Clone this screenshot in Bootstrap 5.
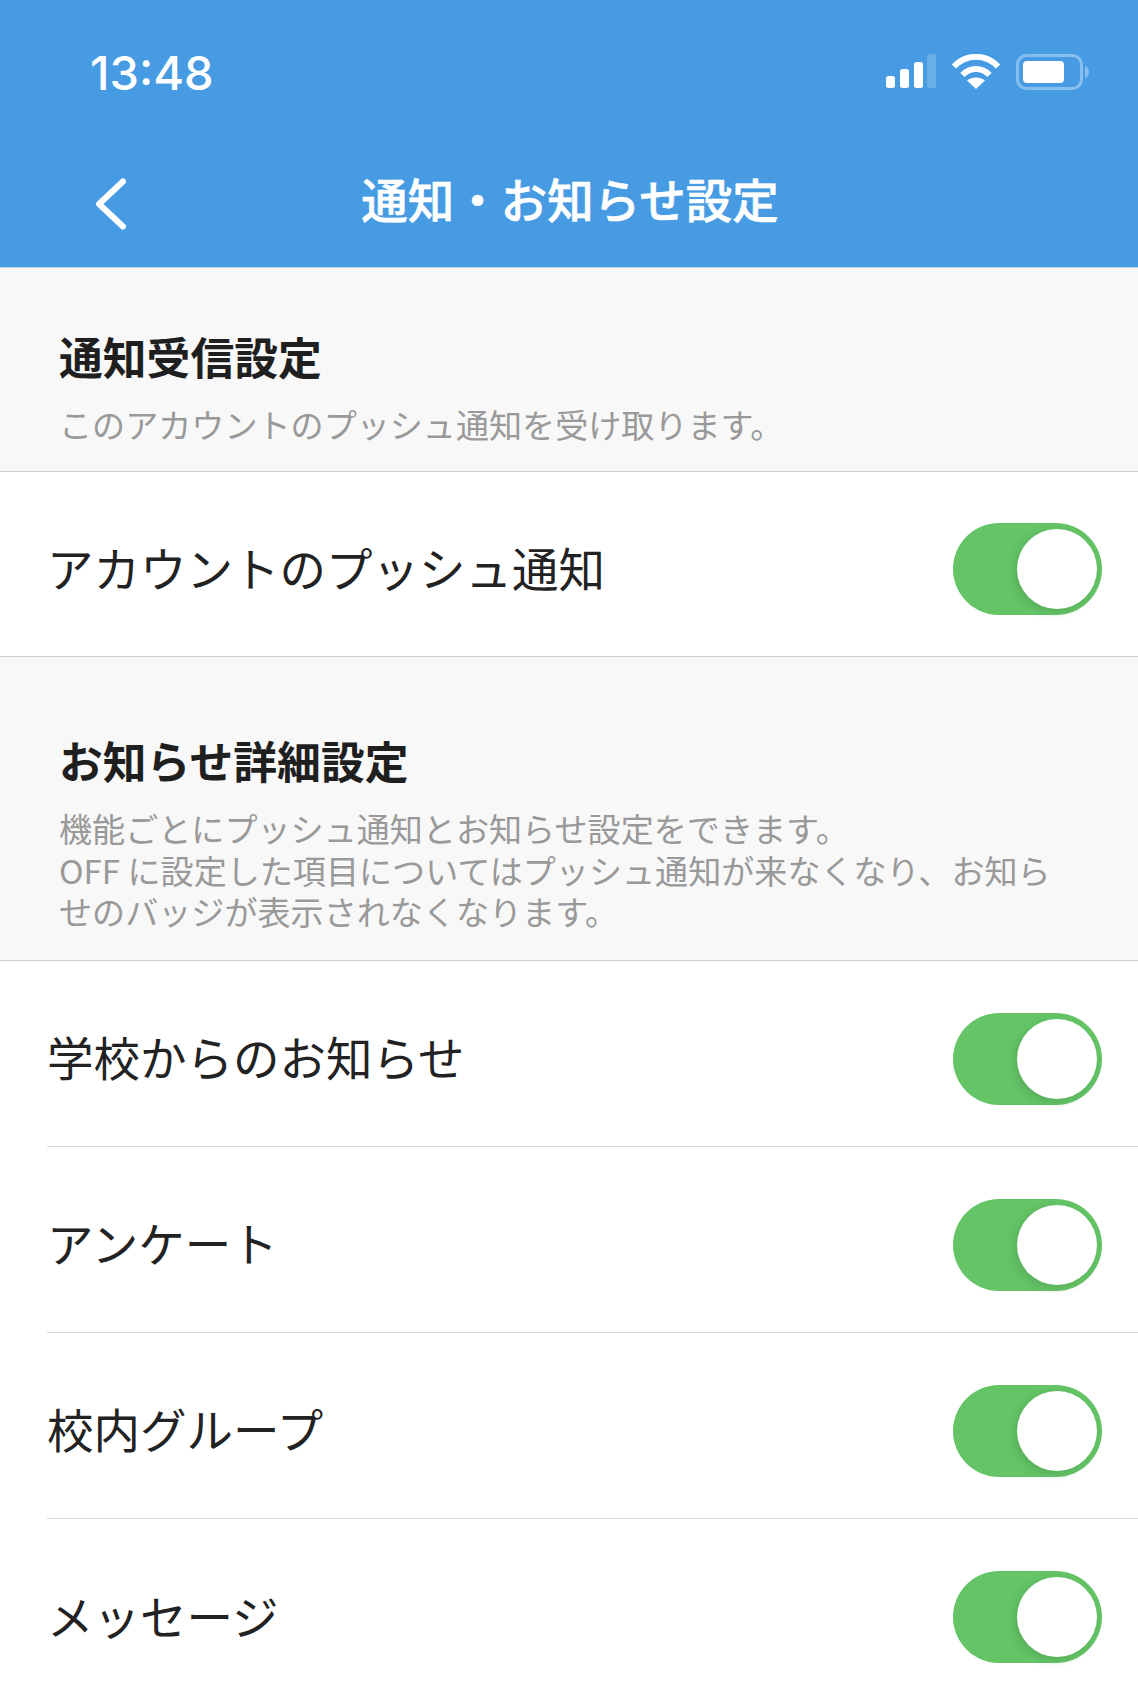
<!DOCTYPE html>
<html lang="ja">
<head>
  <meta charset="UTF-8">
  <meta name="viewport" content="width=device-width, initial-scale=1.0">
  <title>通知・お知らせ設定</title>
  <link href="https://cdn.jsdelivr.net/npm/bootstrap@5.3.0/dist/css/bootstrap.min.css" rel="stylesheet">
  <style>
    body {
      font-family: "Noto Sans CJK JP", "Liberation Sans", sans-serif;
      background-color: #fff;
      height: 1700px;
      overflow: hidden;
    }
    .app-head {
      background-color: #469be3;
      height: 268px;
      border-bottom: 1px solid #c9d3dc;
      color: #fff;
    }
    .status-bar {
      height: 144px;
      padding: 0 48px 0 90px;
    }
    .status-time {
      font-family: Inter, "Liberation Sans", sans-serif;
      font-size: 47px;
      font-weight: 500;
      line-height: 1;
    }
    .status-icons {
      gap: 16px;
    }
    .title-bar {
      height: 98px;
      padding-left: 95px;
    }
    .title-back {
      margin-top: 21px;
    }
    .title-text {
      font-size: 46.500px;
      font-weight: 500;
      line-height: 1;
      left: 2px;
      right: 0;
      top: 50%;
      transform: translateY(calc(-50% + 5px));
      -webkit-text-stroke: .6px #fff;
    }
    .sec-head {
      background-color: #f8f8f8;
      border-bottom: 1px solid #cfcfcf;
      padding-left: 59px;
      padding-right: 80px;
    }
    .sec-first {
      height: 204px;
      padding-top: 63px;
    }
    .sec-second {
      height: 304px;
      padding-top: 78px;
    }
    .sec-title {
      font-size: 43.800px;
      font-weight: 700;
      line-height: 50px;
      color: #1f1f1f;
      margin: 0 0 23px;
    }
    .sec-desc {
      font-size: 33.100px;
      line-height: 41.700px;
      color: #999;
      margin: 0;
    }
    .set-row {
      height: 185px;
      padding-left: 47px;
      padding-right: 36px;
      font-size: 46.500px;
      color: #222;
      border-bottom: 1px solid #cfcfcf;
    }
    .set-item {
      height: 186px;
      margin-left: 47px;
      padding-right: 36px;
      font-size: 46.500px;
      color: #222;
      border-bottom: 1px solid #d8d8d8;
    }
    .set-item:last-child {
      border-bottom: 0;
    }
    .set-label {
      padding-top: 5px;
    }
    .toggle-pill {
      width: 149px;
      height: 92px;
      margin-top: 10px;
      border-radius: 46px;
      background: #64c466;
      flex-shrink: 0;
    }
    .toggle-pill::after {
      content: "";
      position: absolute;
      right: 5px;
      top: 6px;
      width: 80px;
      height: 80px;
      border-radius: 50%;
      background: #fff;
      box-shadow: -3px 3px 8px rgba(60, 120, 70, .28);
    }
  </style>
</head>
<body>

  <!-- Header -->
  <div class="app-head">
    <div class="status-bar d-flex align-items-center justify-content-between">
      <span class="status-time">13:48</span>
      <div class="status-icons d-flex align-items-center">
        <svg width="50" height="36" viewBox="0 0 50 36" fill="#fff">
          <rect x="0" y="22" width="9" height="12" rx="2.500"/>
          <rect x="14" y="15" width="9" height="19" rx="2.500"/>
          <rect x="28" y="8" width="9" height="26" rx="2.500"/>
          <rect x="41" y="0" width="9" height="34" rx="2.500" opacity=".2"/>
        </svg>
        <svg width="48" height="36" viewBox="0 0 48 36" fill="none" stroke="#fff" stroke-width="6">
          <path d="M2 12.500C14-.5 34-.5 46 12.500"/>
          <path d="M10.500 21C18 13 30 13 37.500 21"/>
          <path d="M24 35l-9-8.500c5-4 13-4 18 0z" fill="#fff" stroke="none"/>
        </svg>
        <svg width="74" height="36" viewBox="0 0 74 36" fill="none">
          <rect x="1.500" y="1.500" width="64" height="33" rx="9" stroke="#fff" stroke-opacity=".35" stroke-width="3"/>
          <rect x="7" y="7" width="41" height="22" rx="4" fill="#fff"/>
          <path d="M69 12c3 1 4 3.500 4 6s-1 5-4 6z" fill="#fff" fill-opacity=".35"/>
        </svg>
      </div>
    </div>
    <div class="title-bar position-relative d-flex align-items-center">
      <svg class="title-back" width="32" height="52" viewBox="0 0 32 52" fill="none" stroke="#fff" stroke-width="6" stroke-linecap="round" stroke-linejoin="round">
        <path d="M28 3.500L4 26l24 22.500"/>
      </svg>
      <div class="title-text position-absolute text-center">通知・お知らせ設定</div>
    </div>
  </div>

  <!-- Push settings -->
  <div class="sec-head sec-first">
    <h2 class="sec-title">通知受信設定</h2>
    <p class="sec-desc">このアカウントのプッシュ通知を受け取ります。</p>
  </div>
  <div class="set-row d-flex align-items-center justify-content-between">
    <span class="set-label">アカウントのプッシュ通知</span>
    <span class="toggle-pill position-relative"></span>
  </div>

  <!-- Notice settings -->
  <div class="sec-head sec-second">
    <h2 class="sec-title">お知らせ詳細設定</h2>
    <p class="sec-desc">機能ごとにプッシュ通知とお知らせ設定をできます。<br>OFF に設定した項目についてはプッシュ通知が来なくなり、お知らせのバッジが表示されなくなります。</p>
  </div>
  <div>
    <div class="set-item d-flex align-items-center justify-content-between">
      <span class="set-label">学校からのお知らせ</span>
      <span class="toggle-pill position-relative"></span>
    </div>
    <div class="set-item d-flex align-items-center justify-content-between">
      <span class="set-label">アンケート</span>
      <span class="toggle-pill position-relative"></span>
    </div>
    <div class="set-item d-flex align-items-center justify-content-between">
      <span class="set-label">校内グループ</span>
      <span class="toggle-pill position-relative"></span>
    </div>
    <div class="set-item d-flex align-items-center justify-content-between">
      <span class="set-label">メッセージ</span>
      <span class="toggle-pill position-relative"></span>
    </div>
  </div>

  <script src="https://cdn.jsdelivr.net/npm/bootstrap@5.3.0/dist/js/bootstrap.bundle.min.js"></script>
</body>
</html>
